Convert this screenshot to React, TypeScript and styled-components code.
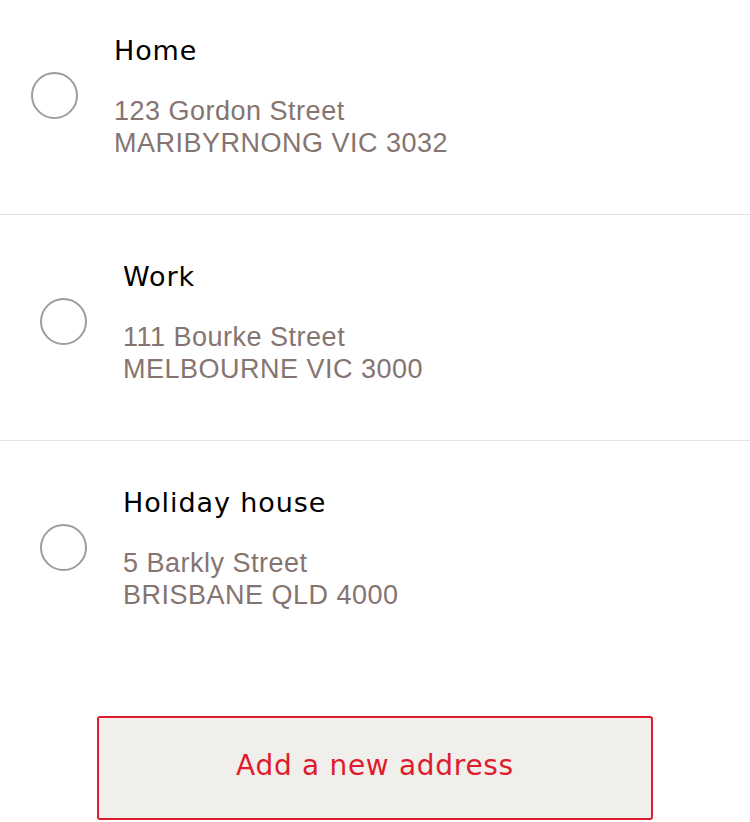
import React from 'react'
import styled, { createGlobalStyle } from 'styled-components'

const GlobalStyle = createGlobalStyle`
  body {
    margin: 0;
    background: #fff;
    font-family: "Liberation Sans", Arial, sans-serif;
  }
`

type Address = {
  id: string
  label: string
  street: string
  suburb: string
}

const ADDRESSES: Address[] = [
  { id: 'home', label: 'Home', street: '123 Gordon Street', suburb: 'MARIBYRNONG VIC 3032' },
  { id: 'work', label: 'Work', street: '111 Bourke Street', suburb: 'MELBOURNE VIC 3000' },
  { id: 'holiday', label: 'Holiday house', street: '5 Barkly Street', suburb: 'BRISBANE QLD 4000' },
]

const App = () => {
  return (
    <>
      <GlobalStyle />
      <Page>
        <List>
          {ADDRESSES.map((a, i) => (
            <Row key={a.id} $first={i === 0} $last={i === ADDRESSES.length - 1}>
              <Radio />
              <Details>
                <Label>{a.label}</Label>
                <Lines>
                  <span>{a.street}</span>
                  <span>{a.suburb}</span>
                </Lines>
              </Details>
            </Row>
          ))}
        </List>

        <Footer>
          <AddButton type='button'>Add a new address</AddButton>
        </Footer>
      </Page>
    </>
  )
}

const Page = styled('div')`
  width: 750px;
  min-height: 822px;
  background: #fff;
`

const List = styled('ul')`
  list-style: none;
  margin: 0;
  padding: 0;
`

const Row = styled('li')<{ $first?: boolean; $last?: boolean }>`
  display: flex;
  align-items: center;
  gap: 36px;
  padding: ${p => (p.$first ? '35px' : '46px')} 0 55px ${p => (p.$first ? '31px' : '40px')};
  border-bottom: ${p => (p.$last ? 'none' : '1px solid #e6e3df')};
`

const Radio = styled('span')`
  flex: none;
  width: 47px;
  height: 47px;
  margin-top: -3px;
  box-sizing: border-box;
  border: 2px solid #9d9d9d;
  border-radius: 50%;
  background: #fff;
`

const Details = styled('div')`
  display: flex;
  flex-direction: column;
  gap: 28px;
`

const Label = styled('div')`
  font-family: "DejaVu Sans", "Noto Sans", sans-serif;
  font-size: 27px;
  letter-spacing: 0.9px;
  line-height: 32px;
  color: #000;
`

const Lines = styled('div')`
  display: flex;
  flex-direction: column;
  font-size: 27px;
  letter-spacing: 0.5px;
  line-height: 32px;
  color: #857470;
`

const Footer = styled('div')`
  display: flex;
  justify-content: center;
  padding-top: 50px;
`

const AddButton = styled('button')`
  width: 556px;
  height: 104px;
  box-sizing: border-box;
  padding: 0 0 5px;
  border: 2px solid #e01b2c;
  border-radius: 3px;
  background: #f1efec;
  color: #e01b2c;
  font-family: "DejaVu Sans", "Noto Sans", sans-serif;
  font-size: 28px;
  letter-spacing: 0.7px;
  cursor: pointer;
`

export default App
